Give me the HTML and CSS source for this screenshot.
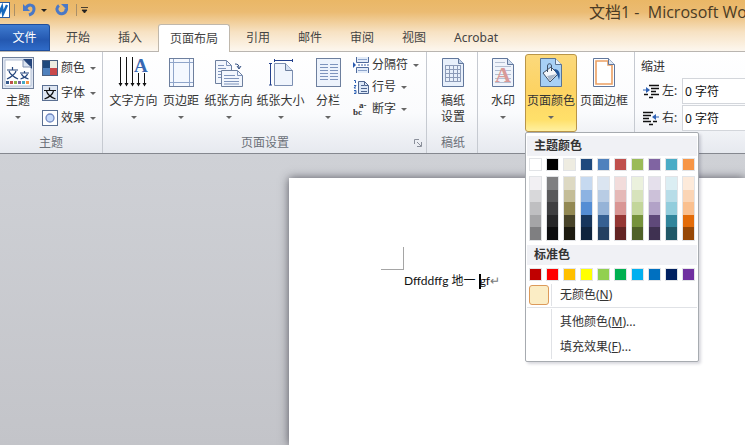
FILE: index.html
```html
<!DOCTYPE html>
<html lang="zh-CN">
<head>
    <meta charset="UTF-8">
    <meta name="viewport" content="width=device-width, initial-scale=1.0">
    <title>文档1 - Microsoft Word</title>
    <link rel="stylesheet" href="styles.css">
</head>
<body>
    <header class="titlebar">
        <div class="quick-access">
            <svg class="word-logo" width="10" height="18" viewBox="0 0 10 18">
                <rect x="-6" y="1.500" width="15.500" height="15" fill="#fff" stroke="#2b5a9e"/>
                <path d="M-3 5l2 8 3-7 1 7 4-9" fill="none" stroke="#1668bd" stroke-width="2.400"/>
            </svg>
            <span class="qa-line"></span>
            <button class="qa-button" aria-label="撤消">
                <svg width="14" height="14" viewBox="0 0 14 14"><path d="M1 1v7h7z" fill="#4a78c6"/><path d="M4 5c2-4 8-4 8 1 0 3-2 5-5 6" fill="none" stroke="#4a78c6" stroke-width="3"/></svg>
            </button>
            <span class="arrow dark"></span>
            <button class="qa-button redo" aria-label="重复">
                <svg width="14" height="14" viewBox="0 0 14 14"><path d="M6 1h7v7z" fill="#4a78c6"/><path d="M4 2.500a4.500 4.500 0 1 0 7 3" fill="none" stroke="#4a78c6" stroke-width="3"/></svg>
            </button>
            <span class="qa-line"></span>
            <svg width="7" height="7" viewBox="0 0 7 7"><path d="M0 .5h7M1 3h5L3.500 6z" fill="#222" stroke="#222" stroke-width=".8"/></svg>
        </div>
        <div class="title">文档1 -&nbsp; Microsoft Word</div>
    </header>

    <nav class="tabs">
        <button class="tab file">文件</button>
        <button class="tab">开始</button>
        <button class="tab">插入</button>
        <button class="tab active">页面布局</button>
        <button class="tab">引用</button>
        <button class="tab">邮件</button>
        <button class="tab">审阅</button>
        <button class="tab">视图</button>
        <button class="tab">Acrobat</button>
    </nav>

    <div class="ribbon">
        <section class="group themes">
            <div class="tools">
                <button class="big">
                    <svg width="32" height="32" viewBox="0 0 32 32">
                        <rect x=".5" y=".5" width="31" height="31" fill="#dfe6f2" stroke="#6f7f9a"/>
                        <path d="M3 3h18l8 8v18H3z" fill="#fff" stroke="#b4c0d4"/>
                        <path d="M21 2h9v10z" fill="#24457c"/>
                        <path d="M21 3v7h8" fill="#dbe4f2" stroke="#8293b2"/>
                        <path d="M5 13h11M10.500 10v3M7 14c1 4 5 6 9 8M14 14c-1 4-5 6-9 8M18 16h9M22.500 14v2M19.500 17c1 3 4 4 7 5M25.500 17c-1 3-4 4-7 5" fill="none" stroke="#24457c" stroke-width="1.200"/>
                        <path d="M4 24h3v3H4z" fill="#35598c"/><path d="M8 24h3v3H8z" fill="#c0504d"/><path d="M12 24h3v3h-3z" fill="#8fb04d"/><path d="M16 24h3v3h-3z" fill="#7d60a0"/><path d="M20 24h3v3h-3z" fill="#46aac5"/><path d="M24 24h3v3h-3z" fill="#f79646"/>
                    </svg>
                    <span>主题</span>
                    <i class="arrow"></i>
                </button>
                <div class="stack wide">
                    <button class="small">
                        <svg width="16" height="16" viewBox="0 0 16 16"><path d="M0 0h16v16H0z" fill="#4a5f80"/><path d="M1 1h7v7H1z" fill="#1f497d"/><path d="M8 1h7v7H8z" fill="#eeece1"/><path d="M1 8h7v7H1z" fill="#4f81bd"/><path d="M8 8h7v7H8z" fill="#c9484a"/></svg>
                        <span>颜色</span><i class="arrow"></i>
                    </button>
                    <button class="small">
                        <svg width="16" height="16" viewBox="0 0 16 16"><rect x=".5" y=".5" width="15" height="15" fill="#dfe7f3" stroke="#5a6f92"/><path d="M2 5.500h12M7.500 2.500v3M4.500 6c1 4 4 6 9 8M11.500 6c-1 4-4 6-9 8" fill="none" stroke="#111" stroke-width="1.200"/></svg>
                        <span>字体</span><i class="arrow"></i>
                    </button>
                    <button class="small">
                        <svg width="16" height="16" viewBox="0 0 16 16"><rect x=".5" y=".5" width="15" height="15" fill="#fff" stroke="#5a6f92"/><circle cx="8" cy="8" r="4" fill="#c6dafa" stroke="#7288c0" stroke-width="1.300"/></svg>
                        <span>效果</span><i class="arrow"></i>
                    </button>
                </div>
            </div>
            <h2>主题</h2>
        </section>

        <section class="group setup">
            <div class="tools">
                <button class="big">
                    <svg class="direction" width="32" height="32" viewBox="0 0 32 32">
                        <path d="M2.500 0v28M8.500 0v28M14.500 0v28M20.500 16v12M26.500 16v12" stroke="#111"/>
                        <path d="M.5 26h4l-2 3.500zM6.500 26h4l-2 3.500zM12.500 26h4l-2 3.500zM18.500 26h4l-2 3.500zM24.500 26h4l-2 3.500z" fill="#111"/>
                        <text x="16" y="15">A</text>
                    </svg>
                    <span>文字方向</span>
                    <i class="arrow"></i>
                </button>
                <button class="big">
                    <svg width="32" height="32" viewBox="0 0 32 32">
                        <rect x="4.500" y="1.500" width="24" height="28" fill="#f4f8ff" stroke="#6d7f9e"/>
                        <path d="M8.500 2v27M24.500 2v27M5 5.500h23M5 25.500h23" stroke="#8fa5ca"/>
                    </svg>
                    <span>页边距</span>
                    <i class="arrow"></i>
                </button>
                <button class="big">
                    <svg width="32" height="32" viewBox="0 0 32 32">
                        <path d="M2.500 3.500h11l5 5v18h-16z" fill="#f2f6fd" stroke="#6d7f9e"/>
                        <path d="M13.500 3.500v5h5M5 8.500h6M5 11.500h8M5 14.500h4M5 17.500h3M5 20.500h3" fill="none" stroke="#7f94bb"/>
                        <path d="M8.500 13.500h16l5 5v11h-21z" fill="#f2f6fd" stroke="#6d7f9e"/>
                        <path d="M24.500 13.500v5h5M11 18.500h11M11 21.500h15M11 24.500h15M11 27h15" fill="none" stroke="#7f94bb"/>
                        <path d="M22 7c3 0 4 1 4 4M24 9l2 3 2-3" fill="none" stroke="#334f80"/>
                    </svg>
                    <span>纸张方向</span>
                    <i class="arrow"></i>
                </button>
                <button class="big">
                    <svg width="32" height="32" viewBox="0 0 32 32">
                        <path d="M9.500 6.500h11l7 7v15h-18z" fill="#f0f5fd" stroke="#7c8fb2"/>
                        <path d="M20.500 6.500v7h7" fill="#d6e1f2" stroke="#6d7f9e"/>
                        <path d="M9 3.500h18M9.500 2v3M27.500 2v3M5.500 6v22M4 6.500h3M4 28h3" stroke="#23408c" fill="none"/>
                    </svg>
                    <span>纸张大小</span>
                    <i class="arrow"></i>
                </button>
                <button class="big">
                    <svg width="32" height="32" viewBox="0 0 32 32">
                        <rect x="4.500" y="1.500" width="24" height="28" fill="#edf3fc" stroke="#6d7f9e"/>
                        <path d="M8 7.500h8M8 10.500h8M8 13.500h8M8 16.500h8M8 19.500h8M8 22.500h8M18 7.500h8M18 10.500h8M18 13.500h8M18 16.500h8M18 19.500h8M18 22.500h8" stroke="#7d94bd"/>
                    </svg>
                    <span>分栏</span>
                    <i class="arrow"></i>
                </button>
                <div class="stack">
                    <button class="small">
                        <svg width="16" height="16" viewBox="0 0 16 16"><path d="M3.500 0v5.500h12V0M3.500 16v-5.500h12V16" fill="#e3ecf9" stroke="#4f6a9c"/><path d="M5 2.500h9M5 13.500h9" stroke="#8ca4cc"/><path d="M5 8h11" stroke="#3d62a8" stroke-dasharray="2 1"/><path d="M0 5l3 3-3 3z" fill="#2a5bb0"/></svg>
                        <span>分隔符</span><i class="arrow"></i>
                    </button>
                    <button class="small">
                        <svg width="16" height="16" viewBox="0 0 16 16"><path d="M5.500 2.500h6l4 4v8h-10z" fill="#dce8f8" stroke="#4d6490"/><path d="M11.500 2.500v4h4M8 6.500h3M8 9.500h6M8 12.500h6" fill="none" stroke="#4d6490"/><path d="M1 1.500h1.500V4M1 6.500h2L1 9h2M1 11.500h2v3H1M1.500 13h1" fill="none" stroke="#2f62b5"/></svg>
                        <span>行号</span><i class="arrow"></i>
                    </button>
                    <button class="small">
                        <svg class="hyphen" width="16" height="16" viewBox="0 0 16 16"><text x="6" y="7">a-</text><text x="0" y="14">bc</text></svg>
                        <span>断字</span><i class="arrow"></i>
                    </button>
                </div>
            </div>
            <h2>页面设置
                <svg class="launcher" width="8" height="8" viewBox="0 0 8 8"><path d="M.5 5V.5H5M3 3l4 4M7.500 3v4.500H3" fill="none" stroke="#8a8f9a"/></svg>
            </h2>
        </section>

        <section class="group paper">
            <div class="tools">
                <button class="big">
                    <svg width="32" height="32" viewBox="0 0 32 32">
                        <path d="M5.500 1.500h16l5 5v23h-21z" fill="#e8f0fb" stroke="#61779c"/>
                        <path d="M21.500 1.500v5h5" fill="#bccde6" stroke="#61779c"/>
                        <path d="M8 8.500h16M8 12.500h16M8 16.500h16M8 20.500h16M8 24.500h16M8.500 8v17M12.500 8v17M16.500 8v17M20.500 8v17M23.500 8v17" stroke="#8c9bb8"/>
                    </svg>
                    <span>稿纸<br>设置</span>
                </button>
            </div>
            <h2>稿纸</h2>
        </section>

        <section class="group background">
            <div class="tools">
                <button class="big">
                    <svg class="watermark" width="32" height="32" viewBox="0 0 32 32">
                        <path d="M5.500 1.500h15l6 6v22h-21z" fill="#f0f4fb" stroke="#61779c"/>
                        <path d="M20.500 1.500v6h6" fill="#cddbee" stroke="#61779c"/>
                        <path d="M8 5.500h10M8 9.500h16M8 13.500h16M8 17.500h16M8 21.500h16M8 25.500h16" stroke="#b4bfd2"/>
                        <text x="8" y="25">A</text>
                    </svg>
                    <span>水印</span>
                    <i class="arrow"></i>
                </button>
                <div class="dropdown">
                    <button class="big open" aria-expanded="true">
                        <svg width="32" height="32" viewBox="0 0 32 32">
                            <path d="M5.500 1.500h15l6 6v22h-21z" fill="#a8d0f5" stroke="#5a7494"/>
                            <path d="M20.500 1.500v6h6" fill="#e8f1fb" stroke="#5a7494"/>
                            <path d="M8 16l8-6 7 7-8 8z" fill="#f4f6fa" stroke="#3f4f66"/>
                            <path d="M12 19l10-2-7 7z" fill="#a9b7ca"/>
                            <path d="M12.500 15V9c0-3 4-3 4 0v5" fill="none" stroke="#3f4f66"/>
                            <path d="M19 12c5 0 7 4 5 11-1-4-2-6-3-7z" fill="#20559c"/>
                        </svg>
                        <span>页面颜色</span>
                        <i class="arrow"></i>
                    </button>
                    <div class="menu">
                        <h3>主题颜色</h3>
                        <div class="swatches">
                            <button class="swatch white" aria-label="白色"></button>
                            <button class="swatch black" aria-label="黑色"></button>
                            <button class="swatch tan" aria-label="茶色"></button>
                            <button class="swatch navy" aria-label="深蓝"></button>
                            <button class="swatch blue" aria-label="蓝色"></button>
                            <button class="swatch brick" aria-label="红色"></button>
                            <button class="swatch olive" aria-label="橄榄色"></button>
                            <button class="swatch violet" aria-label="紫色"></button>
                            <button class="swatch aqua" aria-label="水绿色"></button>
                            <button class="swatch orange" aria-label="橙色"></button>
                        </div>
                        <div class="swatches shades" id="shades"></div>
                        <h3>标准色</h3>
                        <div class="swatches standard">
                            <button class="swatch s1" aria-label="深红"></button>
                            <button class="swatch s2" aria-label="红色"></button>
                            <button class="swatch s3" aria-label="橙色"></button>
                            <button class="swatch s4" aria-label="黄色"></button>
                            <button class="swatch s5" aria-label="浅绿"></button>
                            <button class="swatch s6" aria-label="绿色"></button>
                            <button class="swatch s7" aria-label="浅蓝"></button>
                            <button class="swatch s8" aria-label="蓝色"></button>
                            <button class="swatch s9" aria-label="深蓝"></button>
                            <button class="swatch s10" aria-label="紫色"></button>
                        </div>
                        <button class="menu-item none"><i class="check"></i><span>无颜色(<u>N</u>)</span></button>
                        <div class="menu-more">
                            <button class="menu-item"><i></i><span>其他颜色(<u>M</u>)...</span></button>
                            <button class="menu-item"><i></i><span>填充效果(<u>F</u>)...</span></button>
                        </div>
                    </div>
                </div>
                <button class="big">
                    <svg width="32" height="32" viewBox="0 0 32 32">
                        <path d="M5.500 1.500h15l6 6v22h-21z" fill="#fff" stroke="#61779c"/>
                        <path d="M8 4h12v4h4v19H8z" fill="none" stroke="#eba063" stroke-width="1.600"/>
                        <path d="M20.500 1.500v6h6" fill="#dde7f4" stroke="#61779c"/>
                    </svg>
                    <span>页面边框</span>
                </button>
            </div>
        </section>

        <section class="group indent">
            <h4>缩进</h4>
            <div class="field">
                <svg width="16" height="16" viewBox="0 0 16 16"><path d="M6 2.500h10M8 5.500h8M8 8.500h5M8 11.500h8M1 11.500h4M6 14.500h4" stroke="#111" stroke-width="1.500"/><path d="M0 7h5" stroke="#2f62b5"/><path d="M3 4l4 3-4 3z" fill="#2f62b5"/></svg>
                <label for="left">左:</label>
                <input id="left" type="text" value="0 字符">
            </div>
            <div class="field">
                <svg width="16" height="16" viewBox="0 0 16 16"><path d="M0 2.500h10M0 5.500h8M0 8.500h6M0 11.500h8M10 11.500h4M6 14.500h4" stroke="#111" stroke-width="1.500"/><path d="M12 7h4" stroke="#2f62b5"/><path d="M13 4L9 7l4 3z" fill="#2f62b5"/></svg>
                <label for="right">右:</label>
                <input id="right" type="text" value="0 字符">
            </div>
        </section>
    </div>

    <main class="workspace">
        <div class="page">
            <div class="corner"></div>
            <p>Dffddffg 地一 <span class="caret"></span>gf<span class="mark">↵</span></p>
        </div>
    </main>

    <script>
        const shades = [
            ["#f2f0f3", "#d8d8da", "#bfbfc1", "#a5a5a7", "#7f7f81"],
            ["#7f7f81", "#59595b", "#3f3f41", "#262628", "#0c0c0e"],
            ["#ddd9c3", "#c4bd97", "#938953", "#494429", "#1d1b10"],
            ["#c6d9f0", "#8db3e2", "#548dd4", "#17365d", "#0f243e"],
            ["#dbe5f1", "#b8cce4", "#95b3d7", "#366092", "#244061"],
            ["#f2dcdb", "#e5b9b7", "#d99694", "#953734", "#632423"],
            ["#ebf1dd", "#d7e3bc", "#c3d69b", "#76923c", "#4f6128"],
            ["#e5e0ec", "#ccc1d9", "#b2a2c7", "#5f497a", "#3f3151"],
            ["#dbeef3", "#b7dde8", "#92cddc", "#31859b", "#205867"],
            ["#fdeada", "#fbd5b5", "#fac08f", "#e36c09", "#974806"]
        ];

        const box = document.getElementById('shades');
        shades.forEach(colors => {
            const column = document.createElement('div');
            column.className = 'shade-column';
            colors.forEach(color => {
                const shade = document.createElement('button');
                shade.style.backgroundColor = color;
                shade.setAttribute('aria-label', color);
                column.appendChild(shade);
            });
            box.appendChild(column);
        });
    </script>
</body>
</html>
```

FILE: styles.css
```css
* {
    box-sizing: border-box;
}

body {
    margin: 0;
    min-height: 100vh;
    display: flex;
    flex-direction: column;
    overflow: hidden;
    font-family: "Noto Sans", "Noto Sans CJK SC", sans-serif;
    font-size: 12px;
    line-height: 16px;
    color: #333;
    background: linear-gradient(#eab766, #ebbb72 12px, #f7e2c3 32px, #fdf8f1 52px);
}

button {
    font: inherit;
    color: inherit;
    padding: 0;
    border: none;
    background: none;
    white-space: nowrap;
}

svg {
    display: block;
    flex: none;
}

h2, h3, h4, p {
    margin: 0;
    font-size: 12px;
    font-weight: normal;
}

/* title bar */
.titlebar {
    display: flex;
    justify-content: space-between;
    height: 24px;
    overflow: hidden;
}

.quick-access {
    display: flex;
    align-items: center;
    height: 20px;
}

.qa-line {
    width: 1px;
    height: 12px;
    margin: 0 7px 0 4px;
    background: #a98f68;
}

.redo {
    margin: 0 7px 0 8px;
}

.quick-access .redo + .qa-line {
    margin: 0 4px 0 0;
}

.quick-access .dark {
    margin-left: 5px;
}

.title {
    flex: none;
    width: 156px;
    font-family: "Open Sans", "Noto Sans CJK SC", sans-serif;
    font-size: 16px;
    line-height: 24px;
    color: #4a3b25;
    white-space: nowrap;
}

.arrow {
    width: 0;
    height: 0;
    border: 3px solid transparent;
    border-top-color: #666;
    border-bottom: none;
}

.arrow.dark {
    border-top-color: #222;
}

/* tabs */
.tabs {
    display: flex;
    gap: 4px;
    height: 28px;
    border-bottom: 1px solid #b9b5b0;
}

.tab {
    height: 27px;
    padding: 0 12px;
    color: #444;
}

.tab.file {
    width: 50px;
    padding: 0 8px;
    color: #fff;
    background: linear-gradient(#3f7bd0, #2458b0 60%, #2f6bc8);
    border: 1px solid #1f4e9c;
    border-left: none;
    border-radius: 0 3px 0 0;
}

.tab.active {
    height: 28px;
    padding: 0 11px;
    background: #fff;
    border: 1px solid #c0b8ac;
    border-bottom: none;
    border-radius: 3px 3px 0 0;
}

/* ribbon */
.ribbon {
    display: flex;
    height: 102px;
    background: linear-gradient(#fff, #fafbfd 60%, #e6e9ef);
    border-bottom: 1px solid #85888f;
}

.group {
    flex: none;
    display: flex;
    flex-direction: column;
    justify-content: space-between;
    padding: 2px 4px 2px 5px;
    border-right: 1px solid #c6cad1;
}

.group h2 {
    position: relative;
    text-align: center;
    color: #6b7078;
}

.launcher {
    position: absolute;
    right: 0;
    top: 4px;
}

.tools {
    display: flex;
    gap: 1px;
}

.big {
    display: flex;
    flex-direction: column;
    align-items: center;
    min-width: 42px;
    height: 78px;
    padding: 3px 2px 0;
    border-radius: 3px;
}

.big span {
    margin-top: 4px;
}

.big .arrow {
    margin-top: 7px;
}

.stack {
    display: flex;
    flex-direction: column;
    gap: 6px;
    padding: 3px 3px 0;
}

.stack.wide {
    gap: 9px;
    padding: 6px 6px 0 5px;
}

.small {
    display: flex;
    align-items: center;
    gap: 3px;
}

.small .arrow {
    margin-left: 2px;
}

.direction {
    font: bold 19px "Liberation Serif", serif;
    fill: #3768b2;
}

.hyphen {
    font: bold 9px "Liberation Serif", serif;
    fill: #333;
}

.watermark {
    font: bold 22px "Liberation Serif", serif;
    fill: #d99a98;
}

.themes {
    width: 103px;
    padding-left: 0;
    padding-right: 0;
}

.themes .big {
    min-width: 36px;
}

.setup {
    width: 324px;
}

.paper {
    padding-right: 3px;
}

.background {
    padding-left: 4px;
}

.open {
    padding: 2px 1px 0;
    border: 1px solid #b99548;
    background: linear-gradient(#fbd97c, #fdd363 45%, #ffe06a 85%, #fff0a0);
}

.indent {
    flex: 1;
    justify-content: flex-start;
    padding: 7px 0 0 6px;
    border-right: none;
    min-width: 0;
}

.indent h4 {
    margin-bottom: 2px;
}

.field {
    display: flex;
    align-items: center;
    gap: 3px;
    height: 27px;
    padding-left: 2px;
}

.field label {
    width: 17px;
}

.field input {
    flex: 1;
    min-width: 0;
    height: 26px;
    padding: 0 2px;
    border: 1px solid #d3d6db;
    border-right: none;
    background: #fff;
    font: inherit;
    color: #111;
}

/* page colour menu */
.dropdown {
    position: relative;
}

.menu {
    position: absolute;
    left: 0;
    top: 78px;
    z-index: 5;
    width: 174px;
    padding: 3px 1px 2px;
    background: #fff;
    border: 1px solid #a7abb0;
    border-radius: 2px;
    box-shadow: 2px 2px 3px rgba(60, 60, 90, 0.2);
}

.menu h3 {
    height: 20px;
    padding-left: 7px;
    font-weight: bold;
    line-height: 20px;
    background: #f0f1f5;
}

.swatches {
    display: flex;
    gap: 4px;
    padding: 2px 2px 5px;
}

.swatch {
    width: 13px;
    height: 13px;
    border: 1px solid #e2e4e7;
}

.shades {
    padding: 0 2px 4px;
}

.shade-column {
    display: flex;
    flex-direction: column;
    width: 13px;
    height: 65px;
    border: 1px solid #e2e4e7;
}

.shade-column button {
    flex: 1;
}

.standard {
    padding-top: 3px;
    padding-bottom: 3px;
}

.white { background: #fff; }
.black { background: #000; }
.tan { background: #eeece1; }
.navy { background: #1f497d; }
.blue { background: #4f81bd; }
.brick { background: #c0504d; }
.olive { background: #9bbb59; }
.violet { background: #8064a2; }
.aqua { background: #4bacc6; }
.orange { background: #f79646; }

.s1 { background: #c00000; }
.s2 { background: #ff0000; }
.s3 { background: #ffc000; }
.s4 { background: #ffff00; }
.s5 { background: #92d050; }
.s6 { background: #00b050; }
.s7 { background: #00b0f0; }
.s8 { background: #0070c0; }
.s9 { background: #002060; }
.s10 { background: #7030a0; }

.menu-item {
    display: flex;
    align-items: center;
    width: 100%;
    height: 25px;
    text-align: left;
}

.menu-item i {
    width: 20px;
    margin: 0 2px;
}

.menu-item span {
    align-self: stretch;
    padding-left: 8px;
    line-height: 26px;
    border-left: 1px solid #e0e2e6;
}

.menu-item .check {
    height: 20px;
    border: 1px solid #dc9a5a;
    border-radius: 3px;
    background: #fbedc5;
}

.menu-item.none {
    height: 22px;
}

.menu-item.none span {
    line-height: 22px;
}

.menu-more {
    margin-top: 1px;
    padding-top: 1px;
    border-top: 1px solid #e0e2e6;
}

/* document */
.workspace {
    flex: 1;
    display: flex;
    padding: 24px 0 0 289px;
    background: linear-gradient(#cfd1d6, #c3c4c9);
    overflow: hidden;
}

.page {
    flex: 1;
    padding: 69px 0 0 92px;
    background: #fff;
    box-shadow: 0 0 9px rgba(40, 40, 50, 0.7);
}

.corner {
    width: 23px;
    height: 23px;
    border-right: 1px solid #a5a5a5;
    border-bottom: 1px solid #a5a5a5;
}

.page p {
    padding: 3px 0 0 23px;
    font-family: Lato, "Noto Sans CJK SC", sans-serif;
    font-size: 12px;
    color: #111;
}

.caret {
    display: inline-block;
    width: 2px;
    height: 15px;
    margin-right: -1px;
    background: #000;
    vertical-align: middle;
}

.mark {
    color: #777;
}
```
